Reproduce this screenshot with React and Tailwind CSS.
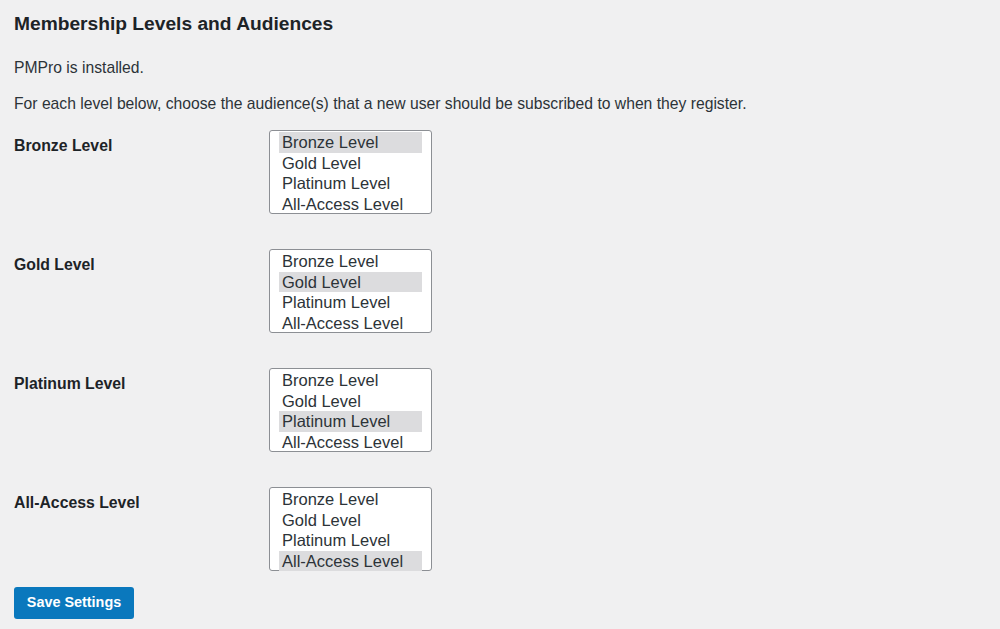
import React from "react";

const levels = ["Bronze Level", "Gold Level", "Platinum Level", "All-Access Level"];

export default function App() {
  return (
    <div
      className="min-h-[629px] w-[1000px] bg-[#f0f0f1] text-[#1d2327] px-[14px] pt-[12px]"
      style={{ fontFamily: '"Liberation Sans", Arial, sans-serif' }}
    >
      {/* Heading */}
      <h2 className="text-[19.2px] font-bold leading-[24px]">
        Membership Levels and Audiences
      </h2>

      <p className="mt-[22px] text-[15.7px] leading-[20px] text-[#2c3338]">PMPro is installed.</p>
      <p className="mt-[16px] text-[15.7px] leading-[20px] text-[#2c3338]">
        For each level below, choose the audience(s) that a new user should be subscribed to when they register.
      </p>

      {/* Level rows */}
      <div className="mt-[16px] flex flex-col gap-[35px]">
        {levels.map((level, i) => (
          <div key={level} className="flex">
            <div className="w-[255px] pt-[7px] text-[15.8px] font-bold leading-[18px]">{level}</div>
            <div className="w-[163px] h-[84px] bg-white border border-[#8c8f94] rounded-[3px] px-[9px] py-[1px]">
              {levels.map((opt, j) => (
                <div
                  key={opt}
                  className={`h-[20.6px] pl-[3px] text-[16.5px] leading-[20px] whitespace-nowrap text-[#2c3338] ${
                    i === j ? "bg-[#dcdcde] text-[#1d2327]" : ""
                  }`}
                >
                  {opt}
                </div>
              ))}
            </div>
          </div>
        ))}
      </div>

      {/* Save */}
      <button className="mt-[16px] h-[32px] w-[120px] rounded-[3px] bg-[#0a78bd] text-white text-[14.4px] font-bold">
        Save Settings
      </button>
    </div>
  );
}
